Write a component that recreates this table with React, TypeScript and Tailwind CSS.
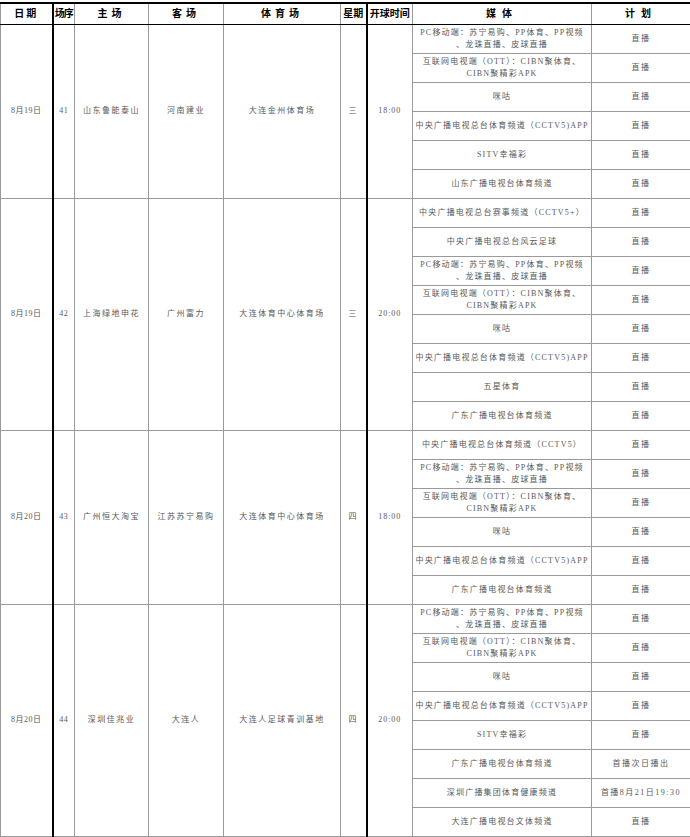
import React from 'react'

type Media = { name: React.ReactNode; plan?: string }
type Match = {
  date: string
  no: string
  home: string
  away: string
  venue: string
  weekday: string
  time: string
  media: Media[]
}

const PC = (
  <>
    PC移动端：苏宁易购、PP体育、PP视频
    <br />
    、龙珠直播、皮球直播
  </>
)
const OTT = (
  <>
    互联网电视端（OTT）：CIBN聚体育、
    <br />
    CIBN聚精彩APK
  </>
)
const APP = '中央广播电视总台体育频道（CCTV5)APP'

const matches: Match[] = [
  {
    date: '8月19日',
    no: '41',
    home: '山东鲁能泰山',
    away: '河南建业',
    venue: '大连金州体育场',
    weekday: '三',
    time: '18:00',
    media: [
      { name: PC },
      { name: OTT },
      { name: '咪咕' },
      { name: APP },
      { name: 'SITV幸福彩' },
      { name: '山东广播电视台体育频道' }
    ]
  },
  {
    date: '8月19日',
    no: '42',
    home: '上海绿地申花',
    away: '广州富力',
    venue: '大连体育中心体育场',
    weekday: '三',
    time: '20:00',
    media: [
      { name: '中央广播电视总台赛事频道（CCTV5+）' },
      { name: '中央广播电视总台风云足球' },
      { name: PC },
      { name: OTT },
      { name: '咪咕' },
      { name: APP },
      { name: '五星体育' },
      { name: '广东广播电视台体育频道' }
    ]
  },
  {
    date: '8月20日',
    no: '43',
    home: '广州恒大淘宝',
    away: '江苏苏宁易购',
    venue: '大连体育中心体育场',
    weekday: '四',
    time: '18:00',
    media: [
      { name: '中央广播电视总台体育频道（CCTV5）' },
      { name: PC },
      { name: OTT },
      { name: '咪咕' },
      { name: APP },
      { name: '广东广播电视台体育频道' }
    ]
  },
  {
    date: '8月20日',
    no: '44',
    home: '深圳佳兆业',
    away: '大连人',
    venue: '大连人足球青训基地',
    weekday: '四',
    time: '20:00',
    media: [
      { name: PC },
      { name: OTT },
      { name: '咪咕' },
      { name: APP },
      { name: 'SITV幸福彩' },
      { name: '广东广播电视台体育频道', plan: '首播次日播出' },
      { name: '深圳广播集团体育健康频道', plan: '首播8月21日19:30' },
      { name: '大连广播电视台文体频道' }
    ]
  }
]

// column widths measured off the sheet
const widths = [52, 22, 74, 75, 117, 26, 46, 179, 99]

const cell = 'border border-[#9a9a9a] text-center align-middle p-0'
const thickL = 'border-l-2 border-l-black'
const head = 'border-t-2 border-t-black border-b-black'

export default function App() {
  return (
    <div
      className="w-[690px] bg-white pt-[2px] text-[#595959]"
      style={{ fontFamily: '"Liberation Serif", "Noto Sans CJK SC", serif' }}
    >
      <table className="w-[690px] table-fixed border-collapse">
        <colgroup>
          {widths.map((w, i) => (
            <col key={i} style={{ width: w }} />
          ))}
        </colgroup>
        <thead>
          <tr className="h-[21px] text-[10px] font-bold text-black">
            <th className={`${cell} ${head} tracking-[2px]`}>日期</th>
            <th className={`${cell} ${thickL} ${head} tracking-[-1px]`}>场序</th>
            <th className={`${cell} ${head} tracking-[4px]`}>主场</th>
            <th className={`${cell} ${head} tracking-[4px]`}>客场</th>
            <th className={`${cell} ${head} tracking-[4px]`}>体育场</th>
            <th className={`${cell} ${head}`}>星期</th>
            <th className={`${cell} ${thickL} ${head}`}>开球时间</th>
            <th className={`${cell} ${head} tracking-[6px]`}>媒体</th>
            <th className={`${cell} ${head} tracking-[6px]`}>计划</th>
          </tr>
        </thead>
        <tbody className="text-[8px] leading-[12px] tracking-[1.5px]">
          {matches.map((m, gi) =>
            m.media.map((md, i) => (
              <tr key={`${gi}-${i}`} className="h-[29px]">
                {i === 0 && (
                  <>
                    <td rowSpan={m.media.length} className={`${cell} tracking-[0.5px]`}>
                      {m.date}
                    </td>
                    <td rowSpan={m.media.length} className={`${cell} ${thickL} tracking-[0.5px]`}>
                      {m.no}
                    </td>
                    <td rowSpan={m.media.length} className={cell}>
                      {m.home}
                    </td>
                    <td rowSpan={m.media.length} className={cell}>
                      {m.away}
                    </td>
                    <td rowSpan={m.media.length} className={cell}>
                      {m.venue}
                    </td>
                    <td rowSpan={m.media.length} className={cell}>
                      {m.weekday}
                    </td>
                    <td rowSpan={m.media.length} className={`${cell} ${thickL} tracking-[1px]`}>
                      {m.time}
                    </td>
                  </>
                )}
                <td className={`${cell} whitespace-nowrap tracking-[1.2px]`}>{md.name}</td>
                <td className={`${cell} tracking-[1.5px]`}>{md.plan ?? '直播'}</td>
              </tr>
            ))
          )}
        </tbody>
      </table>
    </div>
  )
}
